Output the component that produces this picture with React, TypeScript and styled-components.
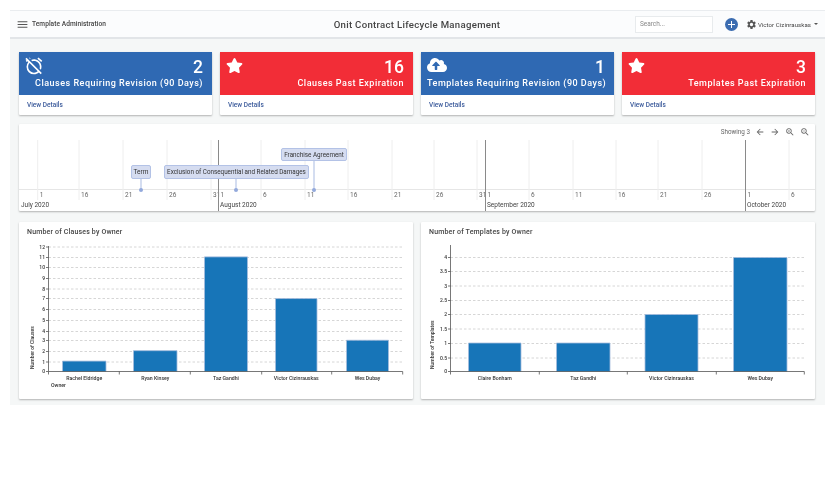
import React from "react";
import styled, { createGlobalStyle } from "styled-components";
import { MdOutlineAlarmOff, MdSettings, MdZoomIn, MdZoomOut, MdArrowBack, MdArrowForward, MdMenu } from "react-icons/md";
import { FaStar, FaCloudUploadAlt } from "react-icons/fa";

const Global = createGlobalStyle`
  html, body { margin: 0; padding: 0; background: #fff; }
  body { font-family: Roboto, "Liberation Sans", sans-serif; color: #444; }
`;
const Frame = styled.div`
  width: 815px; height: 395px; margin: 10px 0 0 10px; background: #f5f7f7;
  display: flex; flex-direction: column; filter: blur(0.3px);
`;
const Header = styled.header`
  height: 26px; background: #fbfcfd; border-top: 1px solid #e9ecef; border-bottom: 2px solid #e2e5e8;
  display: grid; grid-template-columns: 1fr auto 1fr; align-items: center; padding: 0 7px 0 6px;
`;
const HeaderLeft = styled.div`display: flex; align-items: center; gap: 3px; color: #555;`;
const AppName = styled.span`font-size: 6.6px; font-weight: 500; color: #444; letter-spacing: .05px;`;
const Title = styled.div`font-size: 9.6px; font-weight: 500; color: #444; letter-spacing: .3px;`;
const HeaderRight = styled.div`display: flex; align-items: center; justify-content: flex-end; color: #555;`;
const Search = styled.input`
  width: 78px; height: 17px; box-sizing: border-box; border: 1px solid #e8ebed; background: #fff; padding: 0 4px;
  font: 400 6.5px Roboto, sans-serif; margin-right: 12px; outline: none;
  &::placeholder { color: #888; }
`;
const AddButton = styled.span`
  width: 13px; height: 13px; border-radius: 50%; background: #3b6cb0; position: relative; margin-right: 8px;
  &::before { content: ""; position: absolute; left: 3px; top: 6px; width: 7px; height: 1.2px; background: #fff; }
  &::after { content: ""; position: absolute; left: 6px; top: 3px; width: 1.2px; height: 7px; background: #fff; }
`;
const UserName = styled.span`font-size: 6.1px; color: #444; margin-left: 1px; letter-spacing: .05px;`;
const Caret = styled.span`
  width: 0; height: 0; margin-left: 3px; border: 2px solid transparent; border-top-color: #555; border-bottom: 0;
`;
const Main = styled.main`padding: 13px 10px 0 9px; display: flex; flex-direction: column;`;
const CardRow = styled.section`display: grid; grid-template-columns: repeat(4, 193px); gap: 8px;`;
const Panel = styled.div`background: #fff; box-shadow: 0 1px 2px rgba(0,0,0,.28); border-radius: 1px;`;
const StatCard = styled(Panel)`height: 63px; display: flex; flex-direction: column;`;
const StatHead = styled.div<{ $tone: string }>`
  height: 43px; box-sizing: border-box; background: ${p => p.$tone}; color: #fff; padding: 5px 9px 0 6px;
  display: grid; grid-template-columns: auto 1fr; grid-template-rows: 20px 15px;
`;
const StatIcon = styled.div`display: flex; align-items: flex-start; font-size: 17px; line-height: 0;`;
const StatValue = styled.div`text-align: right; font-size: 17.5px; font-weight: 500; line-height: 20px;`;
const StatLabel = styled.div`
  grid-column: 1 / 3; text-align: right; font-size: 9px; font-weight: 500; line-height: 13px; letter-spacing: .5px; white-space: nowrap;
`;
const ViewLink = styled.a`font-size: 6.5px; font-weight: 500; color: #3d5c9c; padding: 1px 8px 0; line-height: 19px;`;
const TimelineCard = styled(Panel)`margin-top: 9px; height: 87px; display: flex; flex-direction: column;`;
const Toolbar = styled.div`
  height: 16px; padding: 0 5px 0 0; display: flex; align-items: center; justify-content: flex-end; gap: 5px;
  font-size: 6.3px; color: #666;
`;
const ChartRow = styled.section`display: grid; grid-template-columns: repeat(2, 394px); gap: 8px; margin-top: 11px;`;
const ChartCard = styled(Panel)`height: 177px; display: flex; flex-direction: column;`;
const ChartTitle = styled.h3`
  margin: 0; height: 22px; padding: 5px 8px 0; box-sizing: border-box; font-size: 7px; font-weight: 500; line-height: 10px;
  color: #444; letter-spacing: .17px;
`;
const Drawing = styled.svg`display: block; font-family: Roboto, sans-serif;`;

const stats = [
  { tone: "#2f69b3", icon: <MdOutlineAlarmOff style={{ fontSize: 20, margin: "-1px 0 0 -1px" }} />, value: 2, label: "Clauses Requiring Revision (90 Days)" },
  { tone: "#f22d37", icon: <FaStar />, value: 16, label: "Clauses Past Expiration" },
  { tone: "#2f69b3", icon: <FaCloudUploadAlt style={{ fontSize: 20, marginTop: -2 }} />, value: 1, label: "Templates Requiring Revision (90 Days)" },
  { tone: "#f22d37", icon: <FaStar />, value: 3, label: "Templates Past Expiration" },
];

const dayTicks: [number, string][] = [
  [37.7,"1"],[79,"16"],[123,"21"],[167,"26"],[211,"31"],[261,"6"],[305,"11"],[348,"16"],[392,"21"],[434,"26"],[477,"31"],
  [529,"6"],[573,"11"],[616,"16"],[658,"21"],[702,"26"],[789,"6"],
];
const monthTicks: [number, string][] = [[218.5,"1"],[485.5,"1"],[745.5,"1"]];
const months: [number, string][] = [[21,"July 2020"],[220,"August 2020"],[487,"September 2020"],[747,"October 2020"]];
const events = [
  { x: 131, y: 165, w: 20, h: 14, dot: 141, size: 6.5, label: "Term" },
  { x: 164, y: 165, w: 145, h: 14, dot: 236, size: 6.3, label: "Exclusion of Consequential and Related Damages" },
  { x: 281, y: 148, w: 66, h: 13, dot: 314, size: 6.3, label: "Franchise Agreement" },
];

function Timeline() {
  return (
    <Drawing width={796} height={71} viewBox="19 140 796 71">
      <line x1={19} x2={815} y1={189.5} y2={189.5} stroke="#e6e6e6" />
      {dayTicks.map(([x, t], i) => (
        <g key={i}>
          <line x1={x} x2={x} y1={140} y2={200} stroke="#eeeeee" />
          <text x={x + 2} y={197} fontSize={6.5} fill="#666">{t}</text>
        </g>
      ))}
      {monthTicks.map(([x, t]) => (
        <g key={x}>
          <line x1={x} x2={x} y1={140} y2={211} stroke="#8a8a8a" />
          <text x={x + 2} y={197} fontSize={6.5} fill="#666">{t}</text>
        </g>
      ))}
      {months.map(([x, t]) => <text key={t} x={x} y={207} fontSize={6.5} fill="#444">{t}</text>)}
      {events.map(e => (
        <g key={e.label}>
          <line x1={e.dot} x2={e.dot} y1={e.y + e.h} y2={190} stroke="#a9bbe2" />
          <circle cx={e.dot} cy={190} r={2} fill="#93a9dc" />
          <rect x={e.x + .5} y={e.y + .5} width={e.w - 1} height={e.h - 1} rx={1.5} fill="#d5dcf0" stroke="#b3c2e6" />
          <text x={e.x + e.w / 2} y={e.y + e.h / 2 + 2} fontSize={e.size} textAnchor="middle" fill="#333">{e.label}</text>
        </g>
      ))}
    </Drawing>
  );
}

interface BarChartProps {
  left: number; x0: number; x1: number; top: number; yTicks: [number, string][]; yTitle: string; titleX: number;
  xTicks: number[]; bars: { a: number; b: number; v: number; name: string }[]; unit: number; owner?: boolean;
}
function BarChart({ left, x0, x1, top, yTicks, yTitle, titleX, xTicks, bars, unit, owner }: BarChartProps) {
  const base = 371.5;
  return (
    <Drawing width={394} height={155} viewBox={`${left} 244 394 155`}>
      {yTicks.filter(([y]) => y !== base).map(([y]) => (
        <line key={y} x1={x0} x2={x1} y1={y} y2={y} stroke="#d6d6d6" strokeDasharray="2.5 2" />
      ))}
      {bars.map(b => (
        <g key={b.name}>
          <rect x={b.a} y={base - b.v * unit} width={b.b - b.a} height={b.v * unit} fill="#1775b8" />
          <path d={`M${b.a} ${base}V${base - b.v * unit}H${b.b}V${base}`} fill="none" stroke="#a6bddd" strokeWidth={.8} />
          <text x={(b.a + b.b) / 2} y={380} fontSize={5.2} fontWeight={500} textAnchor="middle" fill="#333">{b.name}</text>
        </g>
      ))}
      <path d={`M${x0} ${top}V${base}H${x1}`} fill="none" stroke="#555" strokeWidth={.8} />
      {yTicks.map(([y, t]) => (
        <g key={y}>
          <line x1={x0 - 2.5} x2={x0} y1={y} y2={y} stroke="#555" strokeWidth={.8} />
          <text x={x0 - 3.5} y={y + 1.8} fontSize={5} fontWeight={500} textAnchor="end" fill="#333">{t}</text>
        </g>
      ))}
      {xTicks.map(x => <line key={x} x1={x} x2={x} y1={base} y2={base + 3} stroke="#555" strokeWidth={.8} />)}
      <text transform={`translate(${titleX} 369) rotate(-90)`} fontSize={5} fontWeight={500} textAnchor="start" fill="#333">{yTitle}</text>
      {owner && <text x={51} y={387} fontSize={5.2} fontWeight={500} fill="#333">Owner</text>}
    </Drawing>
  );
}

const clauseTicks: [number, string][] = [
  [247,"12"],[257.5,"11"],[267.5,"10"],[278.5,"9"],[289,"8"],[298.5,"7"],[309.5,"6"],[320.5,"5"],[331.5,"4"],[340.5,"3"],[351.5,"2"],[362,"1"],[371.5,"0"],
];
const templateTicks: [number, string][] = [
  [257.5,"4"],[271.5,"3.5"],[286,"3"],[300.5,"2.5"],[314.5,"2"],[329,"1.5"],[343.5,"1"],[358,"0.5"],[371.5,"0"],
];

export default function App() {
  return (
    <Frame>
      <Global />
      <Header>
        <HeaderLeft><MdMenu size={13} /><AppName>Template Administration</AppName></HeaderLeft>
        <Title>Onit Contract Lifecycle Management</Title>
        <HeaderRight>
          <Search placeholder="Search..." />
          <AddButton />
          <MdSettings size={11} />
          <UserName>Victor Cizinrauskas</UserName>
          <Caret />
        </HeaderRight>
      </Header>
      <Main>
        <CardRow>
          {stats.map(s => (
            <StatCard key={s.label}>
              <StatHead $tone={s.tone}>
                <StatIcon>{s.icon}</StatIcon>
                <StatValue>{s.value}</StatValue>
                <StatLabel>{s.label}</StatLabel>
              </StatHead>
              <ViewLink>View Details</ViewLink>
            </StatCard>
          ))}
        </CardRow>
        <TimelineCard>
          <Toolbar>
            <span>Showing 3</span>
            <MdArrowBack size={10} />
            <MdArrowForward size={10} />
            <MdZoomIn size={10} />
            <MdZoomOut size={10} />
          </Toolbar>
          <Timeline />
        </TimelineCard>
        <ChartRow>
          <ChartCard>
            <ChartTitle>Number of Clauses by Owner</ChartTitle>
            <BarChart left={19} x0={48.5} x1={402.7} top={246} yTicks={clauseTicks} yTitle="Number of Clauses" titleX={34} unit={10.42} owner
              xTicks={[48.5,119.3,190.3,261.7,331.7,402.7]}
              bars={[
                { a: 62.5, b: 106, v: 1, name: "Rachel Eldridge" },
                { a: 133.5, b: 177, v: 2, name: "Ryan Kinsey" },
                { a: 204.5, b: 247.5, v: 11, name: "Taz Gandhi" },
                { a: 275.5, b: 317, v: 7, name: "Victor Cizinrauskas" },
                { a: 346.5, b: 388.5, v: 3, name: "Wes Dubay" },
              ]} />
          </ChartCard>
          <ChartCard>
            <ChartTitle>Number of Templates by Owner</ChartTitle>
            <BarChart left={421} x0={450.5} x1={804.3} top={245} yTicks={templateTicks} yTitle="Number of Templates" titleX={434} unit={28.5}
              xTicks={[450.5,539.3,627.3,716.3,804.3]}
              bars={[
                { a: 468.5, b: 521, v: 1, name: "Claire Bonham" },
                { a: 556.5, b: 610, v: 1, name: "Taz Gandhi" },
                { a: 645, b: 698, v: 2, name: "Victor Cizinrauskas" },
                { a: 733.5, b: 787, v: 4, name: "Wes Dubay" },
              ]} />
          </ChartCard>
        </ChartRow>
      </Main>
    </Frame>
  );
}
